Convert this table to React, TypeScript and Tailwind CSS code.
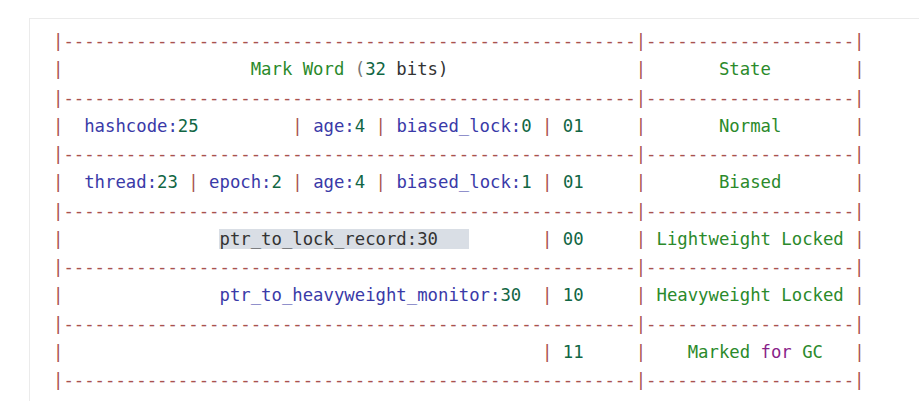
type Seg = [string, string];

const P = 'text-[#a9524f]';
const G = 'text-[#2b8a2b]';
const N = 'text-[#116644]';
const V = 'text-[#3a3aa8]';
const K = 'text-[#8a1f8a]';
const D = 'text-[#333333]';
const L = 'text-[#777777]';

const sp = (n: number) => ' '.repeat(n);
const rule: Seg[] = [['|' + '-'.repeat(55) + '|' + '-'.repeat(20) + '|', P]];

const lines: Seg[][] = [
  rule,
  [
    ['|', P],
    [sp(18), ''],
    ['Mark Word', G],
    [' ', ''],
    ['(', L],
    ['32', N],
    [' bits)', D],
    [sp(18), ''],
    ['|', P],
    [sp(7) + 'State' + sp(8), G],
    ['|', P],
  ],
  rule,
  [
    ['|', P],
    ['  ', ''],
    ['hashcode:', V],
    ['25', N],
    [sp(9), ''],
    ['|', P],
    [' ', ''],
    ['age:', V],
    ['4', N],
    [' ', ''],
    ['|', P],
    [' ', ''],
    ['biased_lock:', V],
    ['0', N],
    [' ', ''],
    ['|', P],
    [' ', ''],
    ['01', N],
    [sp(5), ''],
    ['|', P],
    [sp(7) + 'Normal' + sp(7), G],
    ['|', P],
  ],
  rule,
  [
    ['|', P],
    ['  ', ''],
    ['thread:', V],
    ['23', N],
    [' ', ''],
    ['|', P],
    [' ', ''],
    ['epoch:', V],
    ['2', N],
    [' ', ''],
    ['|', P],
    [' ', ''],
    ['age:', V],
    ['4', N],
    [' ', ''],
    ['|', P],
    [' ', ''],
    ['biased_lock:', V],
    ['1', N],
    [' ', ''],
    ['|', P],
    [' ', ''],
    ['01', N],
    [sp(5), ''],
    ['|', P],
    [sp(7) + 'Biased' + sp(7), G],
    ['|', P],
  ],
  rule,
  [
    ['|', P],
    [sp(15), ''],
    ['ptr_to_lock_record:30' + sp(3), D + ' bg-[#d9dee5]'],
    [sp(7), ''],
    ['|', P],
    [' ', ''],
    ['00', N],
    [sp(5), ''],
    ['|', P],
    [' Lightweight Locked ', G],
    ['|', P],
  ],
  rule,
  [
    ['|', P],
    [sp(15), ''],
    ['ptr_to_heavyweight_monitor:', V],
    ['30', N],
    ['  ', ''],
    ['|', P],
    [' ', ''],
    ['10', N],
    [sp(5), ''],
    ['|', P],
    [' Heavyweight Locked ', G],
    ['|', P],
  ],
  rule,
  [
    ['|', P],
    [sp(46), ''],
    ['|', P],
    [' ', ''],
    ['11', N],
    [sp(5), ''],
    ['|', P],
    [sp(4) + 'Marked', G],
    [' ', ''],
    ['for', K],
    [' ', ''],
    ['GC' + sp(3), G],
    ['|', P],
  ],
  rule,
];

export default function App() {
  return (
    <div className="h-[401px] overflow-hidden bg-white pt-[18px] pl-[29px]">
      <div className="h-[420px] border-t border-l border-[#ebebeb] bg-white pt-[8px] pl-[23px]">
        <pre className="m-0 font-['DejaVu_Sans_Mono',monospace] text-[17.3px] leading-[28.25px] whitespace-pre">
          {lines.map((line, i) => (
            <div key={i}>
              {line.map(([t, c], j) => (
                <span key={j} className={c}>
                  {t}
                </span>
              ))}
            </div>
          ))}
        </pre>
      </div>
    </div>
  );
}
